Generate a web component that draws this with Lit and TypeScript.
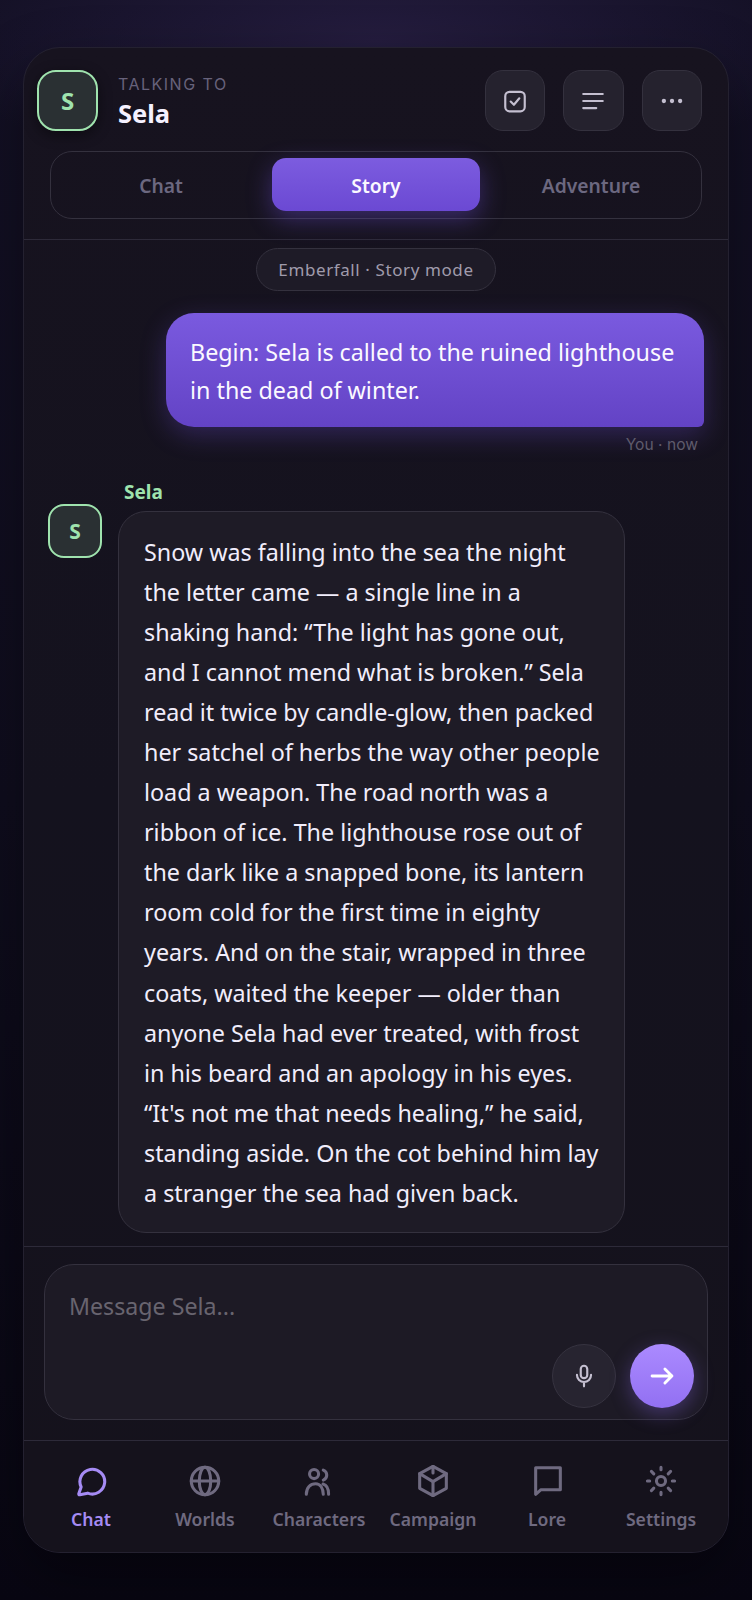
import { LitElement, html, css, svg } from "lit";
import { customElement } from "lit/decorators.js";

const navItems = [
  { label: "Chat", active: true, icon: svg`<path d="M4.600 16.500A9.300 9.300 0 1 1 9.500 21.100L3.600 22.300Q2.600 22.400 2.900 21.400Z"/>` },
  { label: "Worlds", icon: svg`<circle cx="12" cy="12" r="10.300"/><path d="M1.700 12h20.600"/><ellipse cx="12" cy="12" rx="4.300" ry="10.300"/>` },
  { label: "Characters", icon: svg`<circle cx="8.300" cy="6.800" r="3.400"/><path d="M2.500 22C2.500 17 5.500 14 9.500 14C13 14 15.200 17.500 15.200 22"/><path d="M15 14.300C17.500 15 19.200 18 19.200 22"/><path d="M15.200 3.800A4 4 0 0 1 15.200 11.300"/>` },
  { label: "Campaign", icon: svg`<path d="M12 1l10 5.500v11L12 23 2 17.500v-11z"/><path d="M2 6.500l10 6 10-6"/><path d="M12 12.500V23M12 1v5"/>` },
  { label: "Lore", icon: svg`<path d="M3.500 22V2H22V18.500H7.500Z"/>` },
  { label: "Settings", icon: svg`<circle cx="12" cy="12" r="3.400"/><path d="M12 1.800v1.700M12 20.500v1.700M1.800 12h1.700M20.500 12h1.700M4.800 4.800l1.800 1.800M17.400 17.400l1.800 1.800M4.800 19.200l1.800-1.800M17.400 6.600l1.800-1.800"/>` },
];

const storyLines = [
  "Snow was falling into the sea the night",
  "the letter came — a single line in a",
  "shaking hand: “The light has gone out,",
  "and I cannot mend what is broken.” Sela",
  "read it twice by candle-glow, then packed",
  "her satchel of herbs the way other people",
  "load a weapon. The road north was a",
  "ribbon of ice. The lighthouse rose out of",
  "the dark like a snapped bone, its lantern",
  "room cold for the first time in eighty",
  "years. And on the stair, wrapped in three",
  "coats, waited the keeper — older than",
  "anyone Sela had ever treated, with frost",
  "in his beard and an apology in his eyes.",
  "“It's not me that needs healing,” he said,",
  "standing aside. On the cot behind him lay",
  "a stranger the sea had given back.",
];

@customElement("app-root")
export class AppRoot extends LitElement {
  static styles = css`
    :host {
      display: block;
      min-height: 1600px;
      box-sizing: border-box;
      padding: 47px 23px;
      background:
        radial-gradient(ellipse 60% 9% at 50% 2.500%, #241c3e 0%, rgba(36, 28, 62, 0) 100%),
        linear-gradient(180deg, #131024 0%, #0f0d1d 50%, #080612 100%);
      font-family: "Noto Sans", sans-serif;
      color: #f1edfb;
    }
    * { box-sizing: border-box; }
    .panel {
      height: 1506px;
      border: 1px solid #242130;
      border-radius: 37px;
      background: linear-gradient(180deg, #17131f 0%, #14121e 50%, #15121c 100%);
      box-shadow: 0 24px 60px rgba(0, 0, 0, .35);
      display: flex;
      flex-direction: column;
      overflow: hidden;
    }
    .top { flex: none; padding: 22px 26px 20px 13px; border-bottom: 1px solid #2d2a39; }
    .head { display: flex; align-items: center; height: 61px; }
    .avatar {
      flex: none;
      display: flex;
      align-items: center;
      justify-content: center;
      background: #2a3033;
      border: 2px solid #9fe3ae;
      color: #9fe3ae;
      font-weight: 700;
    }
    .avatar.big { width: 61px; height: 61px; border-radius: 19px; font-size: 24px; box-shadow: 0 4px 14px rgba(0,0,0,.45); }
    .who { margin-left: 20px; flex: 1; padding-top: 4px; }
    .eyebrow { font-family: Inter, sans-serif; font-size: 16px; letter-spacing: 1.500px; color: #67627b; line-height: 20px; }
    .name { font-size: 25.500px; font-weight: 700; line-height: 38px; color: #f5f1ff; }
    .btns { display: flex; gap: 18px; }
    .btn {
      width: 60.500px; height: 61px; border-radius: 18px;
      background: #25222e; border: 1px solid #34313e;
      display: flex; align-items: center; justify-content: center; color: #c4bfd0;
    }
    .btn svg { width: 26px; height: 26px; fill: none; stroke: currentColor; stroke-width: 2; stroke-linecap: round; stroke-linejoin: round; }
    .btn svg .dot { fill: currentColor; stroke: none; }
    .tabs {
      margin: 20px 0 0 13px;
      height: 68px;
      border: 1px solid #34313e;
      border-radius: 22px;
      padding: 6px;
      display: flex;
      gap: 7px;
    }
    .tab { flex: 1; height: 53px; padding-top: 2px; display: flex; align-items: center; justify-content: center; font-size: 19.300px; font-weight: 600; color: #6c6880; border-radius: 14px; }
    .tab.on {
      color: #fbf9ff;
      background: linear-gradient(180deg, #7c5cdf 0%, #6b49d3 100%);
      box-shadow: 0 8px 24px rgba(112, 80, 220, .4);
    }
    .scroll { flex: 1; display: flex; flex-direction: column; padding: 8px 24px 0; min-height: 0; overflow: hidden; }
    .scroll > * { flex: none; }
    .pill {
      align-self: center;
      height: 43px;
      padding: 0 21px;
      border: 1px solid #34313e;
      border-radius: 22px;
      background: #1e1b27;
      display: flex; align-items: center;
      font-size: 17px; letter-spacing: .6px; color: #a09bac;
    }
    .mine {
      align-self: flex-end;
      margin-top: 22px;
      width: 538px;
      padding: 20px 24px 18px;
      font-size: 23.300px;
      line-height: 38px;
      color: #fbf9ff;
      background: linear-gradient(180deg, #7a5adf 0%, #6343c5 100%);
      border-radius: 28px 28px 6px 28px;
      box-shadow: 0 8px 26px rgba(112, 80, 220, .3);
    }
    .meta { align-self: flex-end; margin: 8px 6px 0 0; font-family: Inter, sans-serif; font-size: 15.600px; line-height: 20px; color: #5f5b6c; }
    .theirs { display: flex; margin-top: 25px; gap: 16px; }
    .avatar.small { width: 54px; height: 54px; border-radius: 16px; font-size: 21px; margin-top: 24px; }
    .col { width: 507px; }
    .sender { font-size: 19px; font-weight: 700; line-height: 24px; color: #9fe3ae; margin: 0 0 7px 6px; }
    .bubble {
      padding: 20px 25px 19.500px;
      font-size: 23.300px;
      line-height: 40.050px;
      white-space: nowrap;
      color: #f1edfb;
      background: #1e1b26;
      border: 1px solid #34313e;
      border-radius: 28px;
    }
    .composer { height: 194px; flex: none; border-top: 1px solid #2d2a39; padding: 17px 20px 0; }
    .box {
      position: relative;
      height: 156px;
      border: 1px solid #34313e;
      border-radius: 30px;
      background: #1d1a25;
      padding: 26px 24px;
      font-size: 23.200px;
      line-height: 30px;
      color: #68646f;
    }
    .actions { position: absolute; right: 13px; bottom: 11px; display: flex; gap: 14px; }
    .mic, .send { width: 64px; height: 64px; border-radius: 50%; display: flex; align-items: center; justify-content: center; }
    .mic { background: #272430; border: 1px solid #363340; color: #c4bfd0; }
    .send { background: linear-gradient(180deg, #ab8aff 0%, #9270f2 100%); box-shadow: 0 6px 20px rgba(140, 105, 240, .35); color: #fff; }
    .mic svg, .send svg { fill: none; stroke: currentColor; stroke-linecap: round; stroke-linejoin: round; }
    .mic svg { width: 26px; height: 26px; stroke-width: 2; }
    .send svg { width: 28px; height: 28px; stroke-width: 2.500; }
    .nav { flex: none; height: 112px; border-top: 1px solid #2d2a39; padding: 24px 10px 0; display: flex; background: #15121c; }
    .item { flex: 1; display: flex; flex-direction: column; align-items: center; color: #6f6a80; font-size: 17.600px; font-weight: 600; }
    .item.on { color: #a58bf4; }
    .item svg { width: 32px; height: 32px; fill: none; stroke: currentColor; stroke-width: 2.300; stroke-linecap: round; stroke-linejoin: round; }
    .item span { line-height: 26px; margin-top: 9px; }
  `;

  render() {
    return html`
      <div class="panel">
        <div class="top">
          <div class="head">
            <div class="avatar big">S</div>
            <div class="who">
              <div class="eyebrow">TALKING TO</div>
              <div class="name">Sela</div>
            </div>
            <div class="btns">
              <div class="btn"><svg viewBox="0 0 24 24"><rect x="3" y="3.500" width="18" height="18" rx="4"/><path d="M8 12.500l3 3 5-6"/></svg></div>
              <div class="btn"><svg viewBox="0 0 24 24"><path d="M3 5.500h18M3 12h18M3 18.500h12"/></svg></div>
              <div class="btn"><svg viewBox="0 0 24 24"><circle class="dot" cx="4.500" cy="12" r="2"/><circle class="dot" cx="12" cy="12" r="2"/><circle class="dot" cx="19.500" cy="12" r="2"/></svg></div>
            </div>
          </div>
          <div class="tabs">
            <div class="tab">Chat</div>
            <div class="tab on">Story</div>
            <div class="tab">Adventure</div>
          </div>
        </div>
        <div class="scroll">
          <div class="pill">Emberfall · Story mode</div>
          <div class="mine">Begin: Sela is called to the ruined lighthouse in the dead of winter.</div>
          <div class="meta">You · now</div>
          <div class="theirs">
            <div class="avatar small">S</div>
            <div class="col">
              <div class="sender">Sela</div>
              <div class="bubble">${storyLines.map((l) => html`<div>${l}</div>`)}</div>
            </div>
          </div>
        </div>
        <div class="composer">
          <div class="box">
            Message Sela...
            <div class="actions">
              <div class="mic"><svg viewBox="0 0 24 24"><rect x="9" y="2.500" width="6" height="11.500" rx="3"/><path d="M5.500 11a6.500 6.500 0 0 0 13 0M12 17.500v4"/></svg></div>
              <div class="send"><svg viewBox="0 0 24 24"><path d="M3.500 12h17M14.500 6l6 6-6 6"/></svg></div>
            </div>
          </div>
        </div>
        <div class="nav">
          ${navItems.map(
            (n) => html`<div class="item ${n.active ? "on" : ""}"><svg viewBox="0 0 24 24">${n.icon}</svg><span>${n.label}</span></div>`
          )}
        </div>
      </div>
    `;
  }
}
